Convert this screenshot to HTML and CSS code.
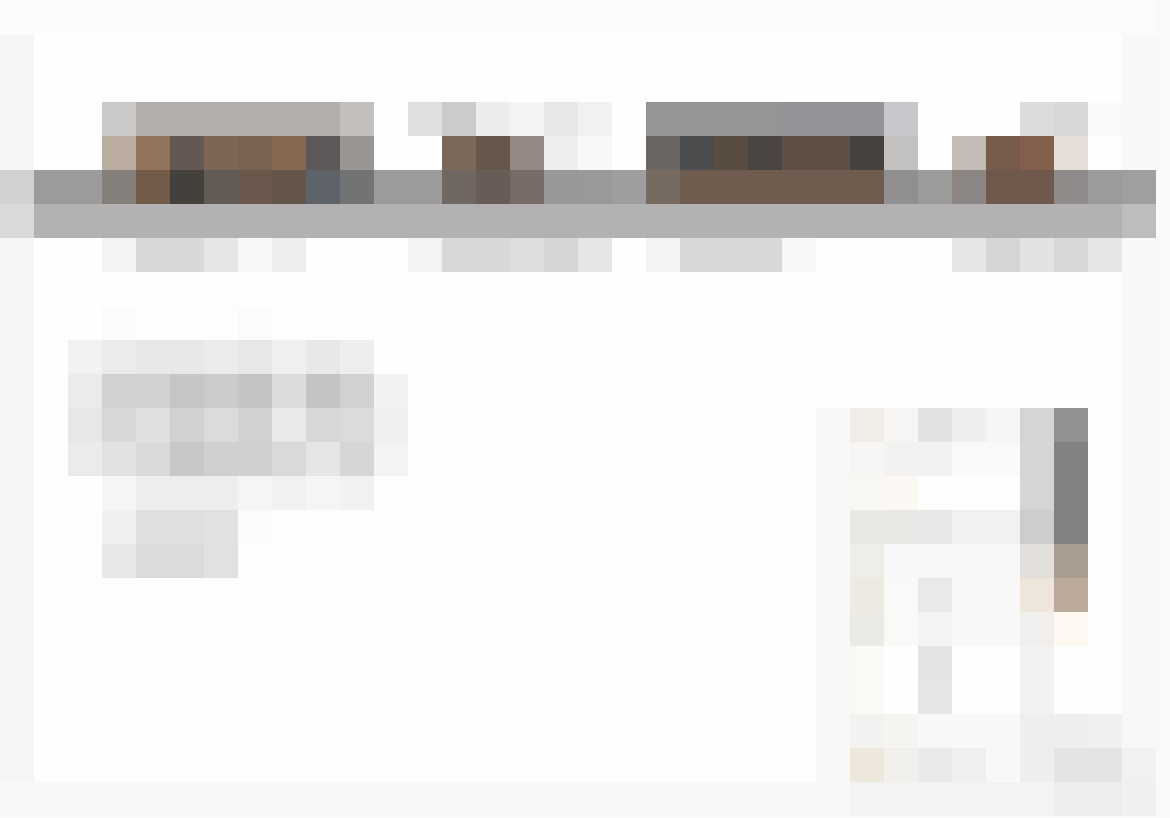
FILE: index.html
```html
<!DOCTYPE html>
<html lang="en">
<head>
<meta charset="utf-8">
<meta name="viewport" content="width=device-width, initial-scale=1">
<title>Mosaic</title>
<link rel="stylesheet" href="styles.css">
</head>
<body>
<main class="page">
<svg class="mosaic" viewBox="0 0 1170 818" aria-hidden="true">
<g transform="scale(34)">
<!-- frame -->
<path fill="#fcfcfc" d="M0 0h34v1H0z"/>
<path fill="#f5f5f5" d="M0 1h1v22H0z"/>
<path fill="#f8f8f8" d="M33 1h1v22h-1zM0 23h31v1H0z"/>
<path fill="#f9f9f9" d="M34 0h1v25h-1z"/>
<path fill="#fafafa" d="M0 24h34v1H0z"/>
<!-- row 3 -->
<path fill="#c9c9c8" d="M3 3h1v1H3z"/>
<path fill="#b2aeab" d="M4 3h6v1H4z"/>
<path fill="#c2bfbd" d="M10 3h1v1h-1z"/>
<path fill="#dfdfdf" d="M12 3h1v1h-1z"/>
<path fill="#cbcbcb" d="M13 3h1v1h-1z"/>
<path fill="#ececec" d="M14 3h1v1h-1z"/>
<path fill="#f4f4f4" d="M15 3h1v1h-1z"/>
<path fill="#e7e7e7" d="M16 3h1v1h-1z"/>
<path fill="#f1f1f1" d="M17 3h1v1h-1z"/>
<path fill="#939695" d="M19 3h4v1h-4z"/>
<path fill="#929497" d="M23 3h3v1h-3z"/>
<path fill="#c8c8cc" d="M26 3h1v1h-1z"/>
<path fill="#dcdcdc" d="M30 3h1v1h-1z"/>
<path fill="#d7d7d6" d="M31 3h1v1h-1z"/>
<path fill="#fafafa" d="M32 3h1v1h-1z"/>
<!-- row 4 -->
<path fill="#bbaca0" d="M3 4h1v1H3z"/>
<path fill="#92735b" d="M4 4h1v1H4z"/>
<path fill="#645853" d="M5 4h1v1H5z"/>
<path fill="#7d6655" d="M6 4h1v1H6z"/>
<path fill="#796353" d="M7 4h1v1H7z"/>
<path fill="#866851" d="M8 4h1v1H8z"/>
<path fill="#5d5958" d="M9 4h1v1H9z"/>
<path fill="#999592" d="M10 4h1v1h-1z"/>
<path fill="#7c6859" d="M13 4h1v1h-1z"/>
<path fill="#67564a" d="M14 4h1v1h-1z"/>
<path fill="#948983" d="M15 4h1v1h-1z"/>
<path fill="#eeeeee" d="M16 4h1v1h-1z"/>
<path fill="#f8f8f8" d="M17 4h1v1h-1z"/>
<path fill="#6a6663" d="M19 4h1v1h-1z"/>
<path fill="#4b4d4f" d="M20 4h1v1h-1z"/>
<path fill="#594d42" d="M21 4h1v1h-1z"/>
<path fill="#4a4542" d="M22 4h1v1h-1z"/>
<path fill="#5f4f45" d="M23 4h2v1h-2z"/>
<path fill="#45413e" d="M25 4h1v1h-1z"/>
<path fill="#c3c2c1" d="M26 4h1v1h-1z"/>
<path fill="#c5bcb6" d="M28 4h1v1h-1z"/>
<path fill="#775b4b" d="M29 4h1v1h-1z"/>
<path fill="#83604c" d="M30 4h1v1h-1z"/>
<path fill="#e5ded6" d="M31 4h1v1h-1z"/>
<!-- row 5 -->
<path fill="#d2d2d2" d="M0 5h1v1H0z"/>
<path fill="#9b9b9b" d="M1 5h2v1H1zM11 5h2v1h-2zM27 5h1v1h-1zM32 5h1v1h-1z"/>
<path fill="#83807c" d="M3 5h1v1H3z"/>
<path fill="#735b4a" d="M4 5h1v1H4z"/>
<path fill="#44403b" d="M5 5h1v1H5z"/>
<path fill="#625b55" d="M6 5h1v1H6z"/>
<path fill="#6b584d" d="M7 5h1v1H7z"/>
<path fill="#645549" d="M8 5h1v1H8z"/>
<path fill="#5e6369" d="M9 5h1v1H9z"/>
<path fill="#727474" d="M10 5h1v1h-1z"/>
<path fill="#716762" d="M13 5h1v1h-1z"/>
<path fill="#685c56" d="M14 5h1v1h-1z"/>
<path fill="#776b68" d="M15 5h1v1h-1z"/>
<path fill="#979998" d="M16 5h1v1h-1z"/>
<path fill="#999999" d="M17 5h1v1h-1z"/>
<path fill="#9e9d9f" d="M18 5h1v1h-1z"/>
<path fill="#776a61" d="M19 5h1v1h-1z"/>
<path fill="#705c4e" d="M20 5h6v1h-6z"/>
<path fill="#918f8f" d="M26 5h1v1h-1z"/>
<path fill="#8b8583" d="M28 5h1v1h-1z"/>
<path fill="#6f584c" d="M29 5h2v1h-2z"/>
<path fill="#8f8b8b" d="M31 5h1v1h-1z"/>
<path fill="#9f9f9f" d="M33 5h1v1h-1z"/>
<!-- row 6 -->
<path fill="#d9d9d9" d="M0 6h1v1H0z"/>
<path fill="#b3b1b1" d="M1 6h32v1H1z"/>
<path fill="#bfbdbc" d="M33 6h1v1h-1z"/>
<!-- row 7 -->
<path fill="#f3f3f3" d="M3 7h1v1H3zM12 7h1v1h-1zM19 7h1v1h-1z"/>
<path fill="#d8d8d8" d="M4 7h2v1H4zM13 7h2v1h-2zM20 7h3v1h-3z"/>
<path fill="#e6e6e6" d="M6 7h1v1H6zM17 7h1v1h-1zM28 7h1v1h-1zM32 7h1v1h-1z"/>
<path fill="#f7f7f7" d="M7 7h1v1H7zM23 7h1v1h-1z"/>
<path fill="#ededed" d="M8 7h1v1H8z"/>
<path fill="#dddddd" d="M15 7h1v1h-1z"/>
<path fill="#d5d5d5" d="M16 7h1v1h-1zM29 7h1v1h-1z"/>
<path fill="#e1e2e1" d="M30 7h1v1h-1z"/>
<path fill="#d7d7d7" d="M31 7h1v1h-1z"/>
<!-- left cluster -->
<path fill="#fbfbfb" d="M3 9h1v1H3zM7 9h1v1H7zM7 15h1v1H7z"/>
<path fill="#fdfdfd" d="M4 9h3v1H4zM8 9h3v1H8zM8 15h3v1H8z"/>
<path fill="#f2f2f2" d="M2 10h1v1H2z"/>
<path fill="#ebebeb" d="M3 10h1v1H3zM6 10h1v1H6z"/>
<path fill="#e7e7e7" d="M4 10h2v1H4zM7 10h1v1H7z"/>
<path fill="#f0f0f0" d="M8 10h1v1H8z"/>
<path fill="#e8e8e8" d="M9 10h1v1H9z"/>
<path fill="#eeeeee" d="M10 10h1v1h-1z"/>
<path fill="#ebebeb" d="M2 11h1v1H2zM2 13h1v1H2z"/>
<path fill="#d1d1d1" d="M3 11h2v1H3zM10 11h1v1h-1z"/>
<path fill="#c6c6c6" d="M5 11h1v1H5z"/>
<path fill="#cbcbcb" d="M6 11h1v1H6z"/>
<path fill="#c3c3c3" d="M7 11h1v1H7zM9 11h1v1H9z"/>
<path fill="#dbdbdb" d="M8 11h1v1H8z"/>
<path fill="#f2f2f2" d="M11 11h1v1h-1z"/>
<path fill="#e7e7e7" d="M2 12h1v1H2z"/>
<path fill="#d7d7d7" d="M3 12h1v1H3zM9 12h1v1H9z"/>
<path fill="#e0e0e0" d="M4 12h1v1H4z"/>
<path fill="#d1d1d1" d="M5 12h1v1H5zM7 12h1v1H7z"/>
<path fill="#dbdbdb" d="M6 12h1v1H6zM10 12h1v1h-1z"/>
<path fill="#e9e9e9" d="M8 12h1v1H8z"/>
<path fill="#f0f0f0" d="M11 12h1v1h-1z"/>
<path fill="#e2e2e2" d="M3 13h1v1H3z"/>
<path fill="#d9d9d9" d="M4 13h1v1H4zM8 13h1v1H8z"/>
<path fill="#c8c8c8" d="M5 13h1v1H5z"/>
<path fill="#d0d0d0" d="M6 13h2v1H6z"/>
<path fill="#e6e6e6" d="M9 13h1v1H9z"/>
<path fill="#d6d6d6" d="M10 13h1v1h-1z"/>
<path fill="#f3f3f3" d="M11 13h1v1h-1z"/>
<path fill="#f5f5f5" d="M3 14h1v1H3zM7 14h1v1H7zM9 14h1v1H9z"/>
<path fill="#ededed" d="M4 14h3v1H4z"/>
<path fill="#f1f1f1" d="M8 14h1v1H8zM10 14h1v1h-1z"/>
<path fill="#efefef" d="M3 15h1v1H3z"/>
<path fill="#dfdfdf" d="M4 15h2v1H4z"/>
<path fill="#e1e1e1" d="M6 15h1v2H6z"/>
<path fill="#e8e8e8" d="M3 16h1v1H3z"/>
<path fill="#dbdbdb" d="M4 16h2v1H4z"/>
<!-- right cluster -->
<path fill="#f8f8f8" d="M24 12h1v11h-1z"/>
<path fill="#f0ede7" d="M25 12h1v1h-1z"/>
<path fill="#f6f5f4" d="M26 12h1v1h-1z"/>
<path fill="#e2e2e2" d="M27 12h1v1h-1z"/>
<path fill="#eeeeee" d="M28 12h1v1h-1z"/>
<path fill="#f5f5f5" d="M29 12h1v1h-1z"/>
<path fill="#d5d5d5" d="M30 12h1v3h-1z"/>
<path fill="#919191" d="M31 12h1v1h-1z"/>
<path fill="#828282" d="M31 13h1v3h-1z"/>
<path fill="#f7f6f4" d="M25 13h1v1h-1z"/>
<path fill="#f4f2f1" d="M26 13h1v1h-1z"/>
<path fill="#f1f1f1" d="M27 13h1v1h-1z"/>
<path fill="#f9f9f9" d="M28 13h2v1h-2z"/>
<path fill="#f9f7f4" d="M25 14h1v1h-1z"/>
<path fill="#fbf8f3" d="M26 14h1v1h-1z"/>
<path fill="#e9e8e2" d="M25 15h1v1h-1z"/>
<path fill="#e9e7e3" d="M26 15h1v1h-1z"/>
<path fill="#e8e8e8" d="M27 15h1v1h-1z"/>
<path fill="#f1f1f1" d="M28 15h2v1h-2z"/>
<path fill="#cdcdcd" d="M30 15h1v1h-1z"/>
<path fill="#eeede7" d="M25 16h1v1h-1z"/>
<path fill="#f8f8fa" d="M26 16h2v1h-2z"/>
<path fill="#f8f8f8" d="M28 16h2v3h-2z"/>
<path fill="#e2dfdb" d="M30 16h1v1h-1z"/>
<path fill="#a99e91" d="M31 16h1v1h-1z"/>
<path fill="#eeeae1" d="M25 17h1v1h-1z"/>
<path fill="#f9f9f8" d="M26 17h1v2h-1z"/>
<path fill="#e8e9ea" d="M27 17h1v1h-1z"/>
<path fill="#eee6db" d="M30 17h1v1h-1z"/>
<path fill="#bcaa9a" d="M31 17h1v1h-1z"/>
<path fill="#ebe9e4" d="M25 18h1v1h-1z"/>
<path fill="#f2f3f3" d="M27 18h1v1h-1z"/>
<path fill="#f0efee" d="M30 18h1v1h-1z"/>
<path fill="#fef8f0" d="M31 18h1v1h-1z"/>
<path fill="#faf9f5" d="M25 19h1v2h-1z"/>
<path fill="#e3e3e3" d="M27 19h1v1h-1z"/>
<path fill="#e6e6e6" d="M27 20h1v1h-1z"/>
<path fill="#f2f2f2" d="M30 19h1v2h-1z"/>
<path fill="#f3f2f0" d="M25 21h1v1h-1z"/>
<path fill="#f5f4f1" d="M26 21h1v1h-1z"/>
<path fill="#f8f8f8" d="M27 21h3v1h-3zM29 22h1v1h-1z"/>
<path fill="#eeeeee" d="M30 21h2v1h-2zM30 22h1v1h-1z"/>
<path fill="#f0f0f0" d="M32 21h1v1h-1z"/>
<path fill="#ede7dc" d="M25 22h1v1h-1z"/>
<path fill="#f2f0ec" d="M26 22h1v1h-1z"/>
<path fill="#e9eae9" d="M27 22h1v1h-1z"/>
<path fill="#efefef" d="M28 22h1v1h-1z"/>
<path fill="#e4e4e3" d="M31 22h2v1h-2z"/>
<path fill="#f1f1f1" d="M33 22h1v1h-1z"/>
<path fill="#f3f3f3" d="M25 23h6v1h-6z"/>
<path fill="#eeeeee" d="M31 23h2v1h-2z"/>
<path fill="#f0f0f0" d="M33 23h1v1h-1z"/>
</g>
</svg>
</main>
</body>
</html>
```
FILE: styles.css
```css
body {
  margin: 0;
  background: #fefefe;
  font-family: "Liberation Sans", Arial, sans-serif;
}

.page {
  width: 100%;
}

.mosaic {
  display: block;
  width: 100%;
  height: auto;
  shape-rendering: crispEdges;
}
```
